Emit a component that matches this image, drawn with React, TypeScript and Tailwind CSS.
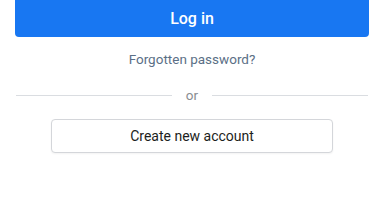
export default function App() {
  return (
    <div className="h-[216px] w-[384px] overflow-hidden bg-white font-['Roboto',sans-serif]">
      <div className="px-[15px]">
        <button className="flex h-[37px] w-full items-center justify-center rounded-b-[4px] bg-[#1877f2] text-[16px] font-medium text-white">
          Log in
        </button>
      </div>
      <div className="mt-[13px] text-center text-[13.5px] leading-[18px] text-[#5b6f86]">
        Forgotten password?
      </div>
      <div className="mt-[18px] flex items-center px-[16px]">
        <div className="h-px flex-1 bg-[#dadde1]" />
        <span className="px-[14px] text-[13.5px] leading-[18px] text-[#8a8d91]">or</span>
        <div className="h-px flex-1 bg-[#dadde1]" />
      </div>
      <div className="mt-[15px] flex justify-center">
        <button className="h-[34px] w-[282px] rounded-[4px] border border-[#d4d6da] bg-white text-[14px] text-[#1c1e21] shadow-[0_1px_2px_rgba(0,0,0,0.05)]">
          Create new account
        </button>
      </div>
    </div>
  )
}
